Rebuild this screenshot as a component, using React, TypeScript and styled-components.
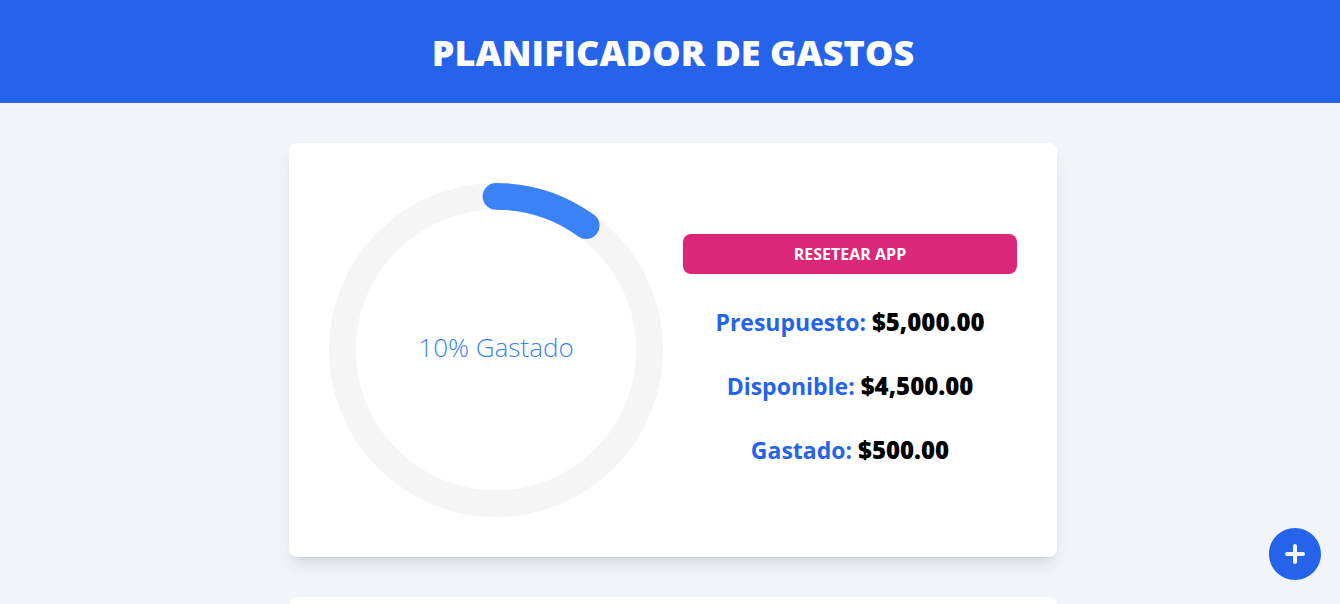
import styled, { createGlobalStyle } from "styled-components";

const GlobalStyle = createGlobalStyle`
  *, *::before, *::after { box-sizing: border-box; }
  body {
    margin: 0;
    background: #f1f5f9;
    color: #000;
    font-family: "Segoe UI", "Open Sans", "Noto Sans", sans-serif;
    overflow-x: hidden;
  }
  h1, p { margin: 0; }
`;

const Header = styled.header`
  padding: 33px 0 30px 6px;
  background: #2563eb;
`;

const Title = styled.h1`
  color: #fff;
  font-size: 36px;
  font-weight: 800;
  line-height: 40px;
  text-align: center;
  text-transform: uppercase;
`;

const Main = styled.main`
  display: flex;
  flex-direction: column;
  align-items: center;
  gap: 40px;
  padding: 40px 0 0 6px;
  height: calc(100vh - 103px);
  overflow: hidden;
`;

const Card = styled.section`
  flex: none;
  width: 100%;
  max-width: 768px;
  padding: 40px;
  border-radius: 8px;
  background: #fff;
  box-shadow: 0 10px 15px -3px rgb(0 0 0 / 10%), 0 4px 6px -4px rgb(0 0 0 / 10%);
`;

const Tracker = styled.div`
  display: grid;
  grid-template-columns: 1fr 1fr;
  align-items: center;
  gap: 20px;
`;

const Gauge = styled.div`
  display: grid;
  place-items: center;

  > * {
    grid-area: 1 / 1;
  }
`;

const GaugeDrawing = styled.svg`
  display: block;
  width: 100%;
`;

const GaugeRing = styled.circle<{ $color: string }>`
  fill: none;
  stroke: ${({ $color }) => $color};
  stroke-width: 8;
  stroke-linecap: round;
`;

const GaugeText = styled.p`
  padding-bottom: 6px;
  color: #3b82f6;
  font-size: 26px;
  font-weight: 300;
  line-height: 32px;
`;

const Summary = styled.div`
  display: flex;
  flex-direction: column;
  gap: 32px;
`;

const ResetButton = styled.button`
  height: 40px;
  border: 0;
  border-radius: 8px;
  background: #db2777;
  color: #fff;
  font-family: inherit;
  font-size: 16px;
  font-weight: 700;
  text-transform: uppercase;
  cursor: pointer;
`;

const AmountLine = styled.p`
  color: #2563eb;
  font-size: 23px;
  font-weight: 700;
  line-height: 32px;
  text-align: center;
`;

const Amount = styled.span`
  color: #000;
  font-size: 24px;
  font-weight: 800;
`;

const AddButton = styled.button`
  position: fixed;
  right: 13px;
  bottom: 18px;
  padding: 0;
  border: 0;
  background: none;
  color: #2563eb;
  cursor: pointer;

  svg {
    display: block;
    width: 64px;
    height: 64px;
  }
`;

const budget = 5000;
const spent = 500;
const percentage = Math.round((spent / budget) * 100);

const formatCurrency = (value: number) =>
  new Intl.NumberFormat("en-US", { style: "currency", currency: "USD" }).format(value);

const amounts = [
  { label: "Presupuesto", value: budget },
  { label: "Disponible", value: budget - spent },
  { label: "Gastado", value: spent },
];

export default function App() {
  return (
    <>
      <GlobalStyle />
      <Header>
        <Title>Planificador de gastos</Title>
      </Header>
      <Main>
        <Card>
          <Tracker>
            <Gauge>
              <GaugeDrawing viewBox="0 0 100 100" aria-hidden="true">
                <GaugeRing cx="50" cy="50" r="46" $color="#f5f5f5" />
                <GaugeRing
                  cx="50"
                  cy="50"
                  r="46"
                  pathLength="100"
                  strokeDasharray={`${percentage} 100`}
                  transform="rotate(-90 50 50)"
                  $color="#3b82f6"
                />
              </GaugeDrawing>
              <GaugeText>{percentage}% Gastado</GaugeText>
            </Gauge>
            <Summary>
              <ResetButton type="button">Resetear App</ResetButton>
              {amounts.map(({ label, value }) => (
                <AmountLine key={label}>
                  {label}: <Amount>{formatCurrency(value)}</Amount>
                </AmountLine>
              ))}
            </Summary>
          </Tracker>
        </Card>
        <Card aria-label="Filtros" />
      </Main>
      <AddButton type="button" aria-label="Agregar gasto">
        <svg viewBox="0 0 24 24" fill="currentColor" aria-hidden="true">
          <path
            fillRule="evenodd"
            clipRule="evenodd"
            d="M12 2.25c-5.385 0-9.75 4.365-9.75 9.75s4.365 9.75 9.75 9.75 9.75-4.365 9.75-9.75S17.385 2.25 12 2.25ZM12.75 9a.75.75 0 0 0-1.5 0v2.25H9a.75.75 0 0 0 0 1.5h2.25V15a.75.75 0 0 0 1.5 0v-2.25H15a.75.75 0 0 0 0-1.5h-2.25V9Z"
          />
        </svg>
      </AddButton>
    </>
  );
}
